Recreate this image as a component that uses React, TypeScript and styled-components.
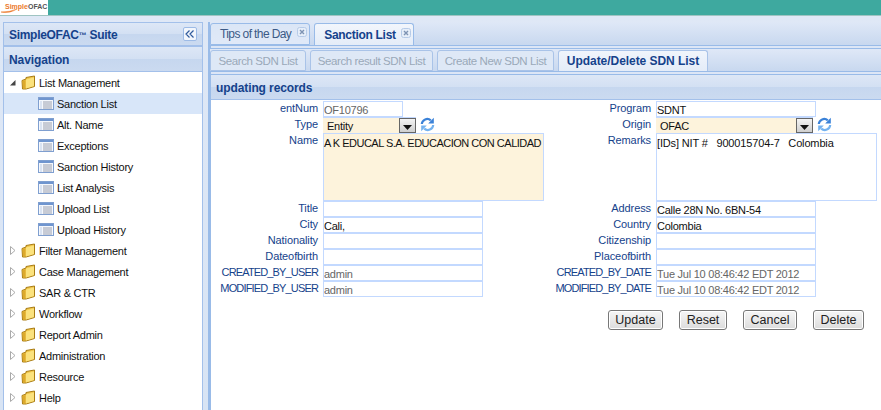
import React from 'react';
import styled, { createGlobalStyle } from 'styled-components';

const GlobalStyle = createGlobalStyle`
  html, body {
    margin: 0;
    padding: 0;
    height: 410px;
    overflow: hidden;
    background: #dfe8f6;
    font-family: "Liberation Sans", Arial, sans-serif;
    font-size: 11px;
    letter-spacing: -0.25px;
  }
`;

const Page = styled.div`
  width: 881px;
  height: 410px;
  display: flex;
  flex-direction: column;
  overflow: hidden;
`;

const TopBar = styled.div`
  height: 15px;
  flex: none;
  background: #3ea99f;
  border-bottom: 1px solid #9fc4c2;
`;

const Logo = styled.div`
  width: 48px;
  height: 15px;
  background: #fff;
  position: relative;
  font: bold 7px/13px "Liberation Sans", sans-serif;
  letter-spacing: 0;
  padding-left: 5px;
  box-sizing: border-box;
  white-space: nowrap;
  color: #555;
  overflow: hidden;
  svg {
    position: absolute;
    left: 1px;
    top: 9px;
  }
`;

const LogoAccent = styled.span`
  color: #ec7a2c;
`;

const Main = styled.div`
  flex: 1;
  display: flex;
  padding: 6px 0 0 3px;
  gap: 5px;
  min-height: 0;
  background: linear-gradient(#dfe8f6, #d8e4f4);
`;

const Sidebar = styled.aside`
  width: 200px;
  flex: none;
  box-sizing: border-box;
  border: solid #a3c0ea;
  border-width: 1px 1px 0 1px;
  background: #fff;
  display: flex;
  flex-direction: column;
`;

const barBg = `linear-gradient(#dde7f6 0%, #d3e0f3 50%, #c6d7ef 52%, #cbdaf0 100%)`;

const SuiteHeader = styled.div`
  height: 24px;
  flex: none;
  box-sizing: border-box;
  padding: 0 5px;
  display: flex;
  align-items: center;
  justify-content: space-between;
  background: ${barBg};
  border-bottom: 2px solid #a3c0ea;
`;

const BarTitle = styled.span`
  font: bold 12px "Liberation Sans", sans-serif;
  letter-spacing: -0.1px;
  color: #15428b;
  padding-top: 1px;
`;

const SuiteTitle = styled(BarTitle)`
  letter-spacing: -0.3px;
`;

const TradeMark = styled.span`
  font-size: 8px;
  vertical-align: 1px;
`;

const CollapseBtn = styled.button`
  width: 14px;
  height: 14px;
  padding: 0;
  border: 1px solid #9dbbe6;
  border-radius: 2px;
  background: #f2f6fc;
  display: flex;
  align-items: center;
  justify-content: center;
`;

const NavHeader = styled.div`
  height: 25px;
  flex: none;
  box-sizing: border-box;
  padding: 0 5px;
  display: flex;
  align-items: center;
  background: ${barBg};
  border-bottom: 1px solid #a3c0ea;
`;

const Tree = styled.ul`
  list-style: none;
  margin: 0;
  padding: 0;
`;

const TreeRow = styled.li<{ $selected?: boolean; $leaf?: boolean }>`
  height: 21px;
  display: flex;
  align-items: center;
  box-sizing: border-box;
  padding-left: ${p => (p.$leaf ? '34px' : '5px')};
  background: ${p => (p.$selected ? '#d8e6f9' : 'transparent')};
  color: #111;
  white-space: nowrap;
`;

const RowLabel = styled.span`
  padding-top: 1px;
`;

const Arrow = styled.svg`
  width: 7px;
  height: 9px;
  flex: none;
  margin-right: 5px;
`;

const FolderSvg = styled.svg`
  width: 15px;
  height: 15px;
  flex: none;
  margin-right: 3px;
`;

const ListSvg = styled.svg`
  width: 16px;
  height: 13px;
  flex: none;
  margin-right: 3px;
`;

const Content = styled.section`
  flex: 1;
  min-width: 0;
  display: flex;
  flex-direction: column;
  border-left: 3px solid #99bbe8;
  background: #fff;
`;

const TabStrip = styled.div`
  height: 23px;
  flex: none;
  display: flex;
  gap: 4px;
  align-items: flex-end;
  margin-left: -1px;
  background: linear-gradient(#dfe8f7, #c8d8ef);
`;

const MainTab = styled.div<{ $active?: boolean }>`
  height: 22px;
  box-sizing: border-box;
  display: flex;
  align-items: center;
  gap: ${p => (p.$active ? '5px' : '6px')};
  padding: 0 2px 0 9px;
  border: 1px solid #99bbe8;
  border-bottom: ${p => (p.$active ? 'none' : '1px solid #99bbe8')};
  border-radius: 3px 3px 0 0;
  background: ${p => (p.$active ? 'linear-gradient(#f2f6fc, #e4ecf8)' : 'linear-gradient(#dbe6f6, #e0e9f8)')};
  color: ${p => (p.$active ? '#15428b' : '#3b5a86')};
  font: ${p => (p.$active ? 'bold 12px "Liberation Sans", sans-serif' : '12px "Liberation Sans", sans-serif')};
  letter-spacing: ${p => (p.$active ? '-0.3px' : '-0.6px')};
  white-space: nowrap;
`;

const TabClose = styled.svg`
  width: 10px;
  height: 10px;
  flex: none;
  margin-top: -4px;
`;

const Band = styled.div`
  height: 4px;
  flex: none;
  box-sizing: border-box;
  background: #dce6f6;
  border-top: 1px solid #99bbe8;
  border-bottom: 1px solid #99bbe8;
`;

const SubStrip = styled.div`
  height: 22px;
  flex: none;
  display: flex;
  gap: 4px;
  align-items: flex-end;
  margin-left: -1px;
  background: linear-gradient(#dfe8f7, #c8d8ef);
`;

const SubTab = styled.div<{ $active?: boolean; $w: number }>`
  width: ${p => p.$w}px;
  height: 21px;
  box-sizing: border-box;
  display: flex;
  align-items: center;
  justify-content: center;
  border: 1px solid #a9c3e8;
  border-bottom: ${p => (p.$active ? 'none' : '1px solid #a9c3e8')};
  border-radius: 3px 3px 0 0;
  background: ${p => (p.$active ? 'linear-gradient(#f0f5fc, #e4ecf8)' : '#dee8f6')};
  color: ${p => (p.$active ? '#15428b' : '#9aa8b9')};
  font: ${p => (p.$active ? 'bold 12px "Liberation Sans", sans-serif' : '11.5px "Liberation Sans", sans-serif')};
  letter-spacing: ${p => (p.$active ? '-0.05px' : '-0.4px')};
  white-space: nowrap;
`;

const RecordsHeader = styled.div`
  height: 25px;
  flex: none;
  box-sizing: border-box;
  display: flex;
  align-items: center;
  padding-left: 5px;
  background: ${barBg};
  border-bottom: 1px solid #a3c0ea;
`;

const FormBody = styled.div`
  padding-top: 1px;
`;

const FormGrid = styled.div`
  display: grid;
  grid-template-columns: 112px 221px 112px 221px;
  grid-auto-rows: 16px;
`;

const FieldLabel = styled.label<{ $caps?: boolean }>`
  text-align: right;
  padding-right: 5px;
  color: #15428b;
  line-height: 15px;
  white-space: nowrap;
  letter-spacing: ${p => (p.$caps ? '-0.85px' : '-0.1px')};
`;

const Cell = styled.div`
  display: flex;
  align-items: flex-start;
`;

const TextBox = styled.div<{ $wide?: boolean; $muted?: boolean }>`
  width: ${p => (p.$wide ? '80px' : '160px')};
  height: 16px;
  box-sizing: border-box;
  border: 1px solid #c3d9ff;
  background: #fff;
  color: ${p => (p.$muted ? '#666' : '#111')};
  padding-left: 0;
  line-height: 16px;
  white-space: nowrap;
  overflow: hidden;
`;

const ComboBox = styled.div<{ $w: number }>`
  width: ${p => p.$w}px;
  height: 16px;
  box-sizing: border-box;
  display: flex;
  justify-content: space-between;
  background: #fdf3dc;
  color: #111;
  padding-left: 4px;
  line-height: 16px;
  border: 1px solid #c3d9ff;
  border-width: 1px 0 0 0;
`;

const ComboArrow = styled.div`
  width: 17px;
  height: 15px;
  box-sizing: border-box;
  border: 1px solid #666;
  background: linear-gradient(#f4f4f4, #cfcfcf);
  display: flex;
  align-items: center;
  justify-content: center;
`;

const RefreshSvg = styled.svg`
  width: 15px;
  height: 15px;
  margin-left: 4px;
  flex: none;
`;

const TextArea = styled.div<{ $yellow?: boolean }>`
  width: 221px;
  height: 68px;
  box-sizing: border-box;
  border: 1px solid #c3d9ff;
  background: ${p => (p.$yellow ? '#fdf3dc' : '#fff')};
  color: #111;
  padding: 2px 0;
  line-height: 14px;
  white-space: pre;
  letter-spacing: ${p => (p.$yellow ? '-0.5px' : '-0.15px')};
`;

const TallRow = styled.div`
  display: grid;
  grid-template-columns: 112px 221px 112px 221px;
  height: 68px;
`;

const ActionRow = styled.div`
  display: flex;
  gap: 16px;
  margin: 13px 0 0 397px;
`;

const ActionButton = styled.button<{ $w: number }>`
  width: ${p => p.$w}px;
  height: 20px;
  padding: 0;
  border: 1px solid #777;
  border-radius: 3px;
  background: linear-gradient(#f6f6f6, #dcdcdc);
  color: #222;
  font: 12.5px "Liberation Sans", sans-serif;
  box-shadow: inset 0 0 0 1px #fff;
`;

const Folder = () => (
  <FolderSvg viewBox="0 0 15 15">
    <path d="M1 5.5 L5 4 L5 2.5 L13.5 1 L13.5 11.5 L5 14 L1.5 14 Z" fill="#f2c94e" stroke="#a97c14" />
    <path d="M5 4.5 L13 2.5 L13 11 L5 13.5 Z" fill="#fbe27e" />
    <path d="M1.5 6 L4.5 5 L4.5 13.5 L2 13.5 Z" fill="#dca92c" />
  </FolderSvg>
);

const ListIcon = () => (
  <ListSvg viewBox="0 0 16 13">
    <rect x="0.5" y="0.5" width="15" height="12" fill="#f4f7fc" stroke="#7f9fd0" />
    <rect x="1" y="1" width="14" height="2" fill="#6f95cf" />
    <path d="M2.5 5h1M2.5 7h1M2.5 9h1M2.5 11h1" stroke="#8aa6d4" />
    <path d="M5 5h9M5 7h9M5 9h9M5 11h9" stroke="#9a9fae" />
  </ListSvg>
);

const ExpandArrow = ({ open }: { open?: boolean }) => (
  <Arrow viewBox="0 0 7 9">
    {open ? (
      <path d="M1 7.5 L6.5 7.5 L6.5 2 Z" fill="#444" />
    ) : (
      <path d="M1.5 0.5 L6 4.5 L1.5 8.5 Z" fill="#fff" stroke="#aaa" />
    )}
  </Arrow>
);

const CloseGlyph = () => (
  <TabClose viewBox="0 0 10 10">
    <rect x="0.5" y="0.5" width="9" height="9" rx="2" fill="#e6eef9" stroke="#b6cbe8" />
    <path d="M3 3 L7 7 M7 3 L3 7" stroke="#7d93b3" strokeWidth="1.4" />
  </TabClose>
);

const Refresh = () => (
  <RefreshSvg viewBox="0 0 15 15">
    <path d="M1.8 7 A5.4 5.4 0 0 1 10.8 3.4" fill="none" stroke="#3b82d8" strokeWidth="2.2" />
    <path d="M13.8 0.8 L13.8 6.6 L8.2 6.6 Z" fill="#3b82d8" />
    <path d="M13.2 8 A5.4 5.4 0 0 1 4.2 11.6" fill="none" stroke="#74b2ef" strokeWidth="2.2" />
    <path d="M1.2 14.2 L1.2 8.4 L6.8 8.4 Z" fill="#74b2ef" />
  </RefreshSvg>
);

const DropArrow = () => (
  <svg width="9" height="5" viewBox="0 0 9 5" style={{ marginTop: 3 }}>
    <path d="M0 0 H9 L4.5 5 Z" fill="#111" />
  </svg>
);

const leaves = ['Sanction List', 'Alt. Name', 'Exceptions', 'Sanction History', 'List Analysis', 'Upload List', 'Upload History'];
const groups = ['Filter Management', 'Case Management', 'SAR & CTR', 'Workflow', 'Report Admin', 'Administration', 'Resource', 'Help'];

const upperRows: [string, string, boolean][] = [
  ['Title', '', false],
  ['City', 'Cali,', false],
  ['Nationality', '', false],
  ['Dateofbirth', '', false],
  ['CREATED_BY_USER', 'admin', true],
  ['MODIFIED_BY_USER', 'admin', true],
];

const rightRows: [string, string, boolean][] = [
  ['Address', 'Calle 28N No. 6BN-54', false],
  ['Country', 'Colombia', false],
  ['Citizenship', '', false],
  ['Placeofbirth', '', false],
  ['CREATED_BY_DATE', 'Tue Jul 10 08:46:42 EDT 2012', true],
  ['MODIFIED_BY_DATE', 'Tue Jul 10 08:46:42 EDT 2012', true],
];

const buttons: [string, number][] = [['Update', 55], ['Reset', 48], ['Cancel', 54], ['Delete', 51]];

export default function App() {
  return (
    <Page>
      <GlobalStyle />
      <TopBar>
        <Logo>
          <LogoAccent>Simple</LogoAccent>OFAC
          <svg width="20" height="5" viewBox="0 0 20 5">
            <path d="M0 3 Q8 5 16 0 Q9 3 0 3 Z" fill="#ec7a2c" stroke="#ec7a2c" strokeWidth="0.5" />
          </svg>
        </Logo>
      </TopBar>
      <Main>
        <Sidebar>
          <SuiteHeader>
            <SuiteTitle>SimpleOFAC<TradeMark>™</TradeMark> Suite</SuiteTitle>
            <CollapseBtn>
              <svg width="10" height="8" viewBox="0 0 10 8">
                <path d="M4.5 0.5 L1 4 L4.5 7.5 M8.5 0.5 L5 4 L8.5 7.5" fill="none" stroke="#2f5a9c" strokeWidth="1.2" />
              </svg>
            </CollapseBtn>
          </SuiteHeader>
          <NavHeader>
            <BarTitle>Navigation</BarTitle>
          </NavHeader>
          <Tree>
            <TreeRow>
              <ExpandArrow open />
              <Folder />
              <RowLabel>List Management</RowLabel>
            </TreeRow>
            {leaves.map((name, i) => (
              <TreeRow key={name} $leaf $selected={i === 0}>
                <ListIcon />
                <RowLabel>{name}</RowLabel>
              </TreeRow>
            ))}
            {groups.map(name => (
              <TreeRow key={name}>
                <ExpandArrow />
                <Folder />
                <RowLabel>{name}</RowLabel>
              </TreeRow>
            ))}
          </Tree>
        </Sidebar>
        <Content>
          <TabStrip>
            <MainTab>Tips of the Day<CloseGlyph /></MainTab>
            <MainTab $active>Sanction List<CloseGlyph /></MainTab>
          </TabStrip>
          <Band />
          <SubStrip>
            <SubTab $w={96}>Search SDN List</SubTab>
            <SubTab $w={123}>Search result SDN List</SubTab>
            <SubTab $w={117}>Create New SDN List</SubTab>
            <SubTab $active $w={150}>Update/Delete SDN List</SubTab>
          </SubStrip>
          <Band />
          <RecordsHeader>
            <BarTitle>updating records</BarTitle>
          </RecordsHeader>
          <FormBody>
            <FormGrid>
              <FieldLabel>entNum</FieldLabel>
              <Cell><TextBox $wide $muted>OF10796</TextBox></Cell>
              <FieldLabel>Program</FieldLabel>
              <Cell><TextBox>SDNT</TextBox></Cell>

              <FieldLabel>Type</FieldLabel>
              <Cell>
                <ComboBox $w={93}>Entity<ComboArrow><DropArrow /></ComboArrow></ComboBox>
                <Refresh />
              </Cell>
              <FieldLabel>Origin</FieldLabel>
              <Cell>
                <ComboBox $w={157}>OFAC<ComboArrow><DropArrow /></ComboArrow></ComboBox>
                <Refresh />
              </Cell>
            </FormGrid>
            <TallRow>
              <FieldLabel>Name</FieldLabel>
              <TextArea $yellow>A K EDUCAL S.A. EDUCACION CON CALIDAD</TextArea>
              <FieldLabel>Remarks</FieldLabel>
              <TextArea>{'[IDs] NIT #   900015704-7   Colombia'}</TextArea>
            </TallRow>
            <FormGrid>
              {upperRows.map(([label, value, muted], i) => (
                <React.Fragment key={label}>
                  <FieldLabel $caps={muted}>{label}</FieldLabel>
                  <Cell><TextBox $muted={muted}>{value}</TextBox></Cell>
                  <FieldLabel $caps={rightRows[i][2]}>{rightRows[i][0]}</FieldLabel>
                  <Cell><TextBox $muted={rightRows[i][2]}>{rightRows[i][1]}</TextBox></Cell>
                </React.Fragment>
              ))}
            </FormGrid>
          </FormBody>
          <ActionRow>
            {buttons.map(([label, w]) => (
              <ActionButton key={label} $w={w}>{label}</ActionButton>
            ))}
          </ActionRow>
        </Content>
      </Main>
    </Page>
  );
}
